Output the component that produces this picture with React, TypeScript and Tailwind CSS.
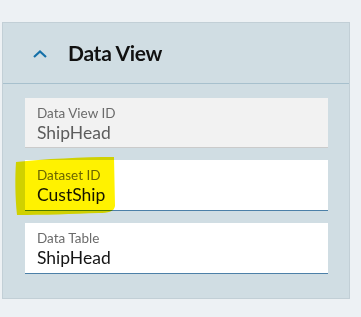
const fields = [
  { label: "Data View ID", value: "ShipHead", readOnly: true },
  { label: "Dataset ID", value: "CustShip", readOnly: false },
  { label: "Data Table", value: "ShipHead", readOnly: false },
];

export default function App() {
  return (
    <div
      className="relative w-[361px] h-[317px] bg-[#edf1f4] pt-[22px] pl-[2px]"
      style={{ fontFamily: "Lato, 'Open Sans', sans-serif" }}
    >
      <div className="w-[348px] h-[277px] bg-[#d0dde3] border border-[#c2cfd6]">
        {/* header */}
        <div className="h-[61px] flex items-center border-b border-[#a7c0cd]">
          <svg width="16" height="10" viewBox="0 0 16 10" className="ml-[29px] mt-[2px]">
            <polyline points="2,8 8,2.5 14,8" fill="none" stroke="#1570a8" strokeWidth="2.2" />
          </svg>
          <span className="ml-[20px] text-[21px] font-bold text-[#111] tracking-[-0.3px]">Data View</span>
        </div>

        {/* fields */}
        <div className="pl-[22px] pt-[14px] flex flex-col gap-[12px]">
          {fields.map((f) => (
            <div
              key={f.label}
              className={
                f.readOnly
                  ? "w-[303px] h-[50px] bg-[#f2f2f2] border-b border-[#cbcbcb] pl-[12px] pt-[6px]"
                  : "w-[303px] h-[51px] bg-white border-b border-[#4c80a8] pl-[12px] pt-[6px]"
              }
            >
              <div className="text-[13.5px] leading-[18px] text-[#6b6b6b]">{f.label}</div>
              <div
                className={
                  f.readOnly
                    ? "text-[17.5px] leading-[22px] text-[#5c5c5c]"
                    : "text-[17.5px] leading-[22px] text-[#141414]"
                }
              >
                {f.value}
              </div>
            </div>
          ))}
        </div>
      </div>

      {/* marker highlight */}
      <svg
        width="104"
        height="60"
        viewBox="0 0 104 60"
        className="absolute left-[13px] top-[156px] mix-blend-multiply pointer-events-none"
      >
        <path
          d="M3 6 C 30 3, 70 1, 101 1 L 102 50 C 101 56, 95 57, 86 57 C 60 58, 30 59, 4 59 C 2 40, 2 20, 3 6 Z"
          fill="#fff200"
        />
      </svg>
    </div>
  );
}
